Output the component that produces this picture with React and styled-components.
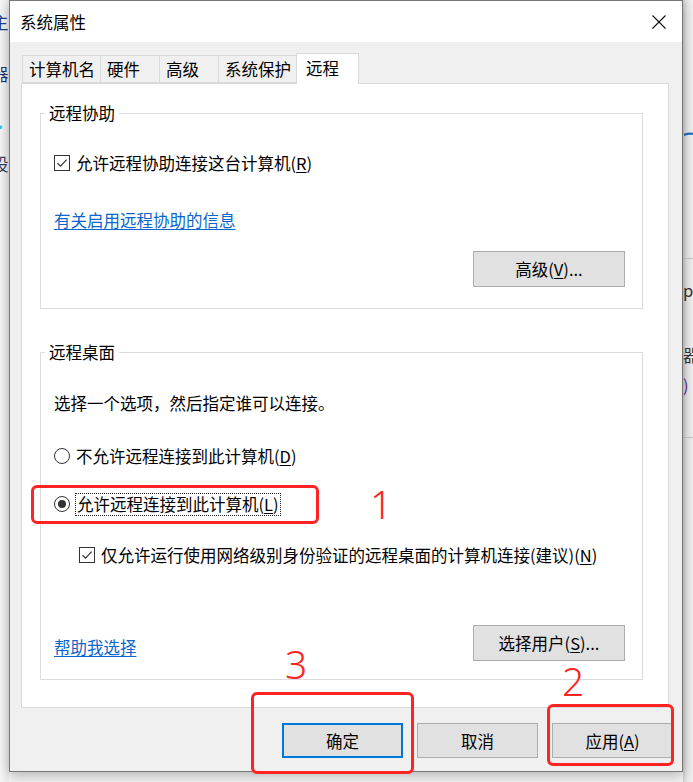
import React from "react";
import styled, { createGlobalStyle } from "styled-components";

const FONT = `"Noto Sans CJK SC", "Noto Sans", sans-serif`;

const GlobalStyle = createGlobalStyle`
  html, body {
    margin: 0;
    padding: 0;
  }
  body {
    font-family: ${FONT};
    color: #000;
  }
  * {
    box-sizing: border-box;
  }
`;

// 背景里被对话框挡住的窗口碎片
const LEFT_FRAGS = [
  { top: 12, text: "主", color: "#1f3f8f" },
  { top: 32, text: "器", color: "#1f2f6f" },
  { top: 33, text: "·", color: "#35c6e6" },
  { top: 17, text: "设", color: "#3a3a5a" },
];

const RIGHT_FRAGS = [
  { top: 21, text: "pl", color: "#333" },
  { top: 45, text: "器", color: "#333" },
  { top: 10, text: ")", color: "#5a2a8a" },
];

const Check = ({ checked = true }) => (
  <Box>
    {checked && (
      <svg width="14" height="14" viewBox="0 0 14 14">
        <path
          d="M2.5 7.2 L5.6 10.2 L11.6 3.6"
          fill="none"
          stroke="#333"
          strokeWidth="1.2"
        />
      </svg>
    )}
  </Box>
);

const App = () => {
  return (
    <>
      <GlobalStyle />
      <Screen>
        <LeftStrip>
          {LEFT_FRAGS.map((f, i) => (
            <Frag key={i} $top={f.top} $color={f.color} $shift={-8}>
              {f.text}
            </Frag>
          ))}
        </LeftStrip>

        <Dialog>
          <TitleBar>
            <Title>系统属性</Title>
            <svg width="14" height="14" viewBox="0 0 14 14">
              <path d="M0.5 0.5 L13.5 13.5 M13.5 0.5 L0.5 13.5" stroke="#111" strokeWidth="1.1" />
            </svg>
          </TitleBar>

          <Body>
            <TabRow>
              <Tab>计算机名</Tab>
              <Tab>硬件</Tab>
              <Tab>高级</Tab>
              <Tab>系统保护</Tab>
              <Tab $active>远程</Tab>
            </TabRow>

            <Panel>
              <Group>
                <Legend>远程协助</Legend>
                <GroupInner $bottom={21}>
                  <Row $top={28}>
                    <Check />
                    <Label>
                      允许远程协助连接这台计算机(<u>R</u>)
                    </Label>
                  </Row>
                  <Row $top={33}>
                    <Link>有关启用远程协助的信息</Link>
                  </Row>
                  <ButtonRow $top={19}>
                    <SmallButton>
                      高级(<u>V</u>)...
                    </SmallButton>
                  </ButtonRow>
                </GroupInner>
              </Group>

              <Group $top={33}>
                <Legend>远程桌面</Legend>
                <GroupInner $bottom={18}>
                  <Row $top={29}>
                    <Label>选择一个选项，然后指定谁可以连接。</Label>
                  </Row>
                  <Row $top={29}>
                    <Radio />
                    <Label>
                      不允许远程连接到此计算机(<u>D</u>)
                    </Label>
                  </Row>
                  <Row $top={24}>
                    <Radio $checked />
                    <FocusLabel>
                      允许远程连接到此计算机(<u>L</u>)
                    </FocusLabel>
                  </Row>
                  <Row $top={27} $indent={25}>
                    <Check />
                    <Label>
                      仅允许运行使用网络级别身份验证的远程桌面的计算机连接(建议)(<u>N</u>)
                    </Label>
                  </Row>
                  <SplitRow $top={58}>
                    <Link>帮助我选择</Link>
                    <SmallButton>
                      选择用户(<u>S</u>)...
                    </SmallButton>
                  </SplitRow>
                </GroupInner>
              </Group>
            </Panel>

            <ButtonBar>
              <DialogButton $primary>确定</DialogButton>
              <DialogButton>取消</DialogButton>
              <DialogButton>
                应用(<u>A</u>)
              </DialogButton>
            </ButtonBar>
          </Body>
        </Dialog>

        <RightStrip>
          <svg width="10" height="20" viewBox="0 0 10 20">
            <path d="M1 5 Q6 3 10 4" fill="none" stroke="#1a6fc4" strokeWidth="2.2" />
          </svg>
          <Rule $top={108} />
          {RIGHT_FRAGS.map((f, i) => (
            <Frag key={i} $top={f.top} $color={f.color} $shift={0}>
              {f.text}
            </Frag>
          ))}
          <Rule $top={42} />
        </RightStrip>

        {/* 红色标注 */}
        <Mark $x={31} $y={485} $w={288} $h={39} />
        <Num $x={370} $y={484}>1</Num>
        <Mark $x={547} $y={704} $w={127} $h={62} />
        <Num $x={562} $y={661}>2</Num>
        <Mark $x={251} $y={692} $w={163} $h={82} />
        <Num $x={285} $y={644}>3</Num>
      </Screen>
    </>
  );
};

const Screen = styled.div`
  position: relative;
  width: 693px;
  height: 782px;
  display: flex;
  align-items: flex-start;
  overflow: hidden;
  background-color: #f3f3f3;
`;

const LeftStrip = styled.div`
  width: 9px;
  height: 782px;
  flex: none;
  display: flex;
  flex-direction: column;
  overflow: hidden;
  background: linear-gradient(to right, #f7f7f7 0%, #ececec 100%);
`;

const RightStrip = styled.div`
  flex: 1;
  height: 782px;
  padding-top: 130px;
  display: flex;
  flex-direction: column;
  overflow: hidden;
  background: linear-gradient(to right, #cfcfcf 0px, #e8e8e8 4px, #f0f0f0 100%);
`;

const Frag = styled.span`
  display: block;
  margin-top: ${(p) => p.$top}px;
  margin-left: ${(p) => p.$shift}px;
  font-size: 16.5px;
  line-height: 20px;
  white-space: nowrap;
  color: ${(p) => p.$color};
`;

const Rule = styled.div`
  margin-top: ${(p) => p.$top}px;
  height: 1px;
  background-color: #c8c8c8;
`;

const Dialog = styled.div`
  position: relative;
  z-index: 1;
  flex: none;
  width: 674px;
  height: 772px;
  display: flex;
  flex-direction: column;
  border: 1px solid #767676;
  background-color: #f0f0f0;
  box-shadow: 0 3px 12px rgba(0, 0, 0, 0.28);
`;

const TitleBar = styled.div`
  height: 41px;
  flex: none;
  display: flex;
  align-items: center;
  justify-content: space-between;
  padding: 0 16px 0 10px;
  background-color: #fff;
`;

const Title = styled.span`
  font-size: 16.5px;
  line-height: 24px;
  color: #000;
`;

const Body = styled.div`
  flex: 1;
  display: flex;
  flex-direction: column;
  padding: 11px 13px 0 11px;
`;

const TabRow = styled.div`
  height: 30px;
  display: flex;
  align-items: flex-end;
  padding-left: 1px;
`;

const Tab = styled.div`
  position: relative;
  height: ${(p) => (p.$active ? 31 : 28)}px;
  min-width: ${(p) => (p.$active ? 63 : 60)}px;
  margin-bottom: ${(p) => (p.$active ? -1 : 0)}px;
  margin-right: -1px;
  padding: ${(p) => (p.$active ? "0 6px 2px 9px" : "0 5px 0 6px")};
  display: flex;
  align-items: center;
  border: 1px solid #d9d9d9;
  border-bottom: ${(p) => (p.$active ? "none" : "1px solid #d9d9d9")};
  background-color: ${(p) => (p.$active ? "#fff" : "#f0f0f0")};
  z-index: ${(p) => (p.$active ? 2 : 1)};
  font-size: 16.5px;
  line-height: 24px;
  white-space: nowrap;
`;

const Panel = styled.div`
  height: 625px;
  flex: none;
  display: flex;
  flex-direction: column;
  padding: 19px 25px 0 18px;
  border: 1px solid #d9d9d9;
  background-color: #fff;
`;

const Group = styled.fieldset`
  margin: ${(p) => p.$top || 0}px 0 0 0;
  padding: 0;
  min-width: 0;
  border: 1px solid #dcdcdc;
`;

const Legend = styled.legend`
  margin-left: 4px;
  padding: 0 4px;
  font-size: 16.5px;
  line-height: 20px;
`;

const GroupInner = styled.div`
  display: flex;
  flex-direction: column;
  padding: 0 17px ${(p) => p.$bottom}px 13px;
`;

const Row = styled.div`
  height: 24px;
  margin-top: ${(p) => p.$top}px;
  padding-left: ${(p) => p.$indent || 0}px;
  display: flex;
  align-items: center;
  gap: 6px;
`;

const ButtonRow = styled.div`
  margin-top: ${(p) => p.$top}px;
  display: flex;
  justify-content: flex-end;
`;

const SplitRow = styled.div`
  margin-top: ${(p) => p.$top}px;
  height: 36px;
  display: flex;
  align-items: center;
  justify-content: space-between;

  & > a {
    margin-top: 7px;
  }
`;

const Label = styled.span`
  font-size: 16.5px;
  line-height: 24px;
  white-space: nowrap;

  u {
    text-underline-offset: 2px;
  }
`;

const FocusLabel = styled(Label)`
  line-height: 21px;
  padding: 0 1px;
  margin-left: -1px;
  border: 1px dotted #222;
`;

const Link = styled.a`
  font-size: 16.5px;
  line-height: 24px;
  color: #0a66cc;
  text-decoration: underline;
  text-underline-offset: 2px;
  cursor: pointer;
`;

const Box = styled.span`
  width: 16px;
  height: 16px;
  flex: none;
  display: inline-flex;
  align-items: center;
  justify-content: center;
  border: 1px solid #333;
  background-color: #fff;
`;

const Radio = styled.span`
  position: relative;
  width: 16px;
  height: 16px;
  flex: none;
  border: 1px solid #333;
  border-radius: 50%;
  background-color: #fff;

  &::after {
    content: "";
    display: ${(p) => (p.$checked ? "block" : "none")};
    position: absolute;
    left: 3px;
    top: 3px;
    width: 8px;
    height: 8px;
    border-radius: 50%;
    background-color: #333;
  }
`;

const SmallButton = styled.button`
  width: 152px;
  height: 36px;
  padding: 0;
  border: 1px solid #adadad;
  background-color: #e1e1e1;
  font-family: ${FONT};
  font-size: 16.5px;
  color: #000;

  u {
    text-underline-offset: 2px;
  }
`;

const ButtonBar = styled.div`
  margin-top: 15px;
  margin-right: -4px;
  display: flex;
  justify-content: flex-end;
  gap: 14px;
`;

const DialogButton = styled.button`
  width: 121px;
  height: 35px;
  padding: 0;
  border: ${(p) => (p.$primary ? "2px solid #0078d7" : "1px solid #adadad")};
  background-color: #e1e1e1;
  font-family: ${FONT};
  font-size: 16.5px;
  color: #000;

  u {
    text-underline-offset: 2px;
  }
`;

const Mark = styled.div`
  position: absolute;
  z-index: 5;
  left: ${(p) => p.$x}px;
  top: ${(p) => p.$y}px;
  width: ${(p) => p.$w}px;
  height: ${(p) => p.$h}px;
  border: 3px solid #ff2323;
  border-radius: 6px;
`;

const Num = styled.span`
  position: absolute;
  z-index: 5;
  left: ${(p) => p.$x}px;
  top: ${(p) => p.$y}px;
  font-family: "Noto Sans", sans-serif;
  font-weight: 300;
  font-size: 39px;
  line-height: 39px;
  color: #ff2323;
`;

export default App;
